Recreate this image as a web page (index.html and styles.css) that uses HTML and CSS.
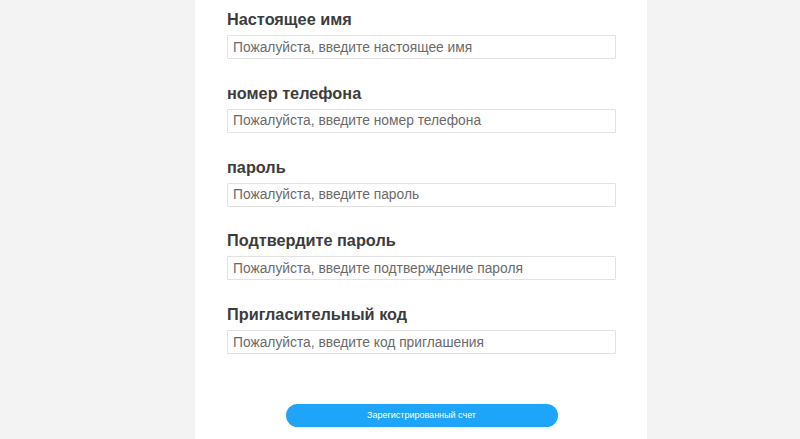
FILE: index.html
```html
<!DOCTYPE html>
<html lang="ru">
<head>
<meta charset="utf-8">
<title>Регистрация</title>
<link rel="stylesheet" href="styles.css">
</head>
<body>
<main class="panel">
  <form class="form">
    <div class="field">
      <label class="label">Настоящее имя</label>
      <input class="input" type="text" placeholder="Пожалуйста, введите настоящее имя">
    </div>
    <div class="field">
      <label class="label">номер телефона</label>
      <input class="input" type="text" placeholder="Пожалуйста, введите номер телефона">
    </div>
    <div class="field">
      <label class="label">пароль</label>
      <input class="input" type="password" placeholder="Пожалуйста, введите пароль">
    </div>
    <div class="field">
      <label class="label">Подтвердите пароль</label>
      <input class="input" type="password" placeholder="Пожалуйста, введите подтверждение пароля">
    </div>
    <div class="field">
      <label class="label">Пригласительный код</label>
      <input class="input" type="text" placeholder="Пожалуйста, введите код приглашения">
    </div>
    <div class="actions">
      <button class="submit" type="button">Зарегистрированный счет</button>
    </div>
  </form>
</main>
</body>
</html>
```
FILE: styles.css
```css
html, body {
  margin: 0;
  padding: 0;
  height: 100%;
}
body {
  background: #f3f3f3;
  font-family: "Liberation Sans", Arial, sans-serif;
  overflow: hidden;
}
.panel {
  width: 452px;
  min-height: 100%;
  margin-left: 195px;
  background: #ffffff;
  box-sizing: border-box;
  padding: 8px 31px 0 32px;
}
.form {
  display: flex;
  flex-direction: column;
}
.field {
  display: flex;
  flex-direction: column;
  margin-bottom: 22.75px;
}
.label {
  font-size: 16.3px;
  font-weight: bold;
  color: #3c3c3c;
  line-height: 22px;
  height: 22px;
  margin-bottom: 5px;
}
.input {
  box-sizing: border-box;
  width: 389px;
  height: 24px;
  margin: 0;
  border: 1px solid #e2e2e2;
  border-radius: 1px;
  padding: 0 5px;
  font-family: "Liberation Sans", Arial, sans-serif;
  font-size: 13.8px;
  color: #333;
  outline: none;
}
.input::placeholder {
  color: #6a6a6a;
}
.actions {
  display: flex;
  justify-content: center;
  padding-top: 27px;
}
.submit {
  width: 272px;
  height: 23px;
  border: none;
  border-radius: 12px;
  background: #1ea5fa;
  color: #ffffff;
  font-family: "Liberation Sans", Arial, sans-serif;
  font-size: 9px;
  padding: 0;
}
```
